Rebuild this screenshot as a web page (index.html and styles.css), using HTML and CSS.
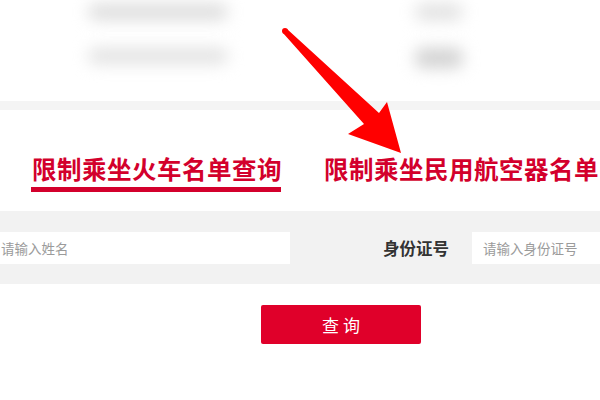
FILE: index.html
```html
<!DOCTYPE html>
<html lang="zh">
<head>
<meta charset="utf-8">
<link rel="stylesheet" href="styles.css">
</head>
<body>
<div class="page">
  <div class="list">
    <div class="row">
      <span class="blob b1"></span>
      <span class="blob b2"></span>
    </div>
    <div class="row">
      <span class="blob b3"></span>
      <span class="blob b4"></span>
    </div>
  </div>
  <div class="sep"></div>
  <div class="tabs">
    <div class="tab active">限制乘坐火车名单查询</div>
    <div class="tab">限制乘坐民用航空器名单</div>
  </div>
  <div class="form">
    <input class="field f1" type="text" placeholder="请输入姓名">
    <label class="label">身份证号</label>
    <input class="field f2" type="text" placeholder="请输入身份证号">
  </div>
  <div class="actions">
    <button class="btn">查 询</button>
  </div>
  <svg class="arrow" width="600" height="400" viewBox="0 0 600 400">
    <polygon points="283,33 287,29 379,113 387,102 401,153 348,134 364,124" fill="#ff0000"/>
    <circle cx="285" cy="31" r="3" fill="#ff0000"/>
  </svg>
</div>
</body>
</html>
```
FILE: styles.css
```css
* { box-sizing: border-box; }
html, body { margin: 0; padding: 0; background: #fff; }
body {
  font-family: "Noto Sans CJK SC", "Microsoft YaHei", sans-serif;
  width: 600px;
  height: 400px;
  overflow: hidden;
}
.page { position: relative; width: 600px; height: 400px; overflow: hidden; }

.list { height: 101px; display: flex; flex-direction: column; }
.row { height: 44px; position: relative; }
.blob {
  display: block;
  filter: blur(8px);
  border-radius: 8px;
  position: absolute;
}
.b1 { left: 88px; top: 4px; width: 140px; height: 16px; background: #dcdcdc; }
.b2 { left: 415px; top: 4px; width: 48px; height: 16px; background: #e0e0e0; }
.b3 { left: 88px; top: 4px; width: 140px; height: 16px; background: #e2e2e2; }
.b4 { left: 415px; top: 4px; width: 48px; height: 20px; background: #d2d2d2; }

.sep { height: 9px; background: #f4f4f4; }

.tabs {
  height: 101px;
  display: flex;
  align-items: flex-start;
  padding-top: 41px;
  white-space: nowrap;
}
.tab {
  font-size: 24.5px;
  letter-spacing: 0.5px;
  font-weight: bold;
  color: #d3002c;
  line-height: 36px;
  flex: none;
}
.tab.active {
  margin-left: 31px;
  padding-left: 1px;
  width: 250px;
  border-bottom: 5px solid #d3002c;
}
.tab + .tab { margin-left: 43px; }

.form {
  height: 73px;
  background: #f2f2f2;
  display: flex;
  align-items: center;
  padding-top: 1px;
}
.field {
  flex: none;
  height: 32px;
  border: none;
  background: #fff;
  font-family: inherit;
  font-size: 13.5px;
  color: #333;
  outline: none;
}
.field::placeholder { color: #9b9b9b; }
.f1 { width: 290px; padding-left: 1px; }
.label {
  flex: none;
  margin-left: 93px;
  font-size: 16.5px;
  font-weight: bold;
  color: #333;
  width: 89px;
}
.f2 { width: 140px; padding-left: 11px; }

.actions { padding-top: 21px; padding-left: 261px; }
.btn {
  width: 160px;
  height: 39px;
  border: none;
  border-radius: 2px;
  background: #e0002a;
  color: #fff;
  font-family: inherit;
  font-size: 17px;
  cursor: pointer;
  padding: 0;
}

.arrow { position: absolute; left: 0; top: 0; pointer-events: none; }
```
